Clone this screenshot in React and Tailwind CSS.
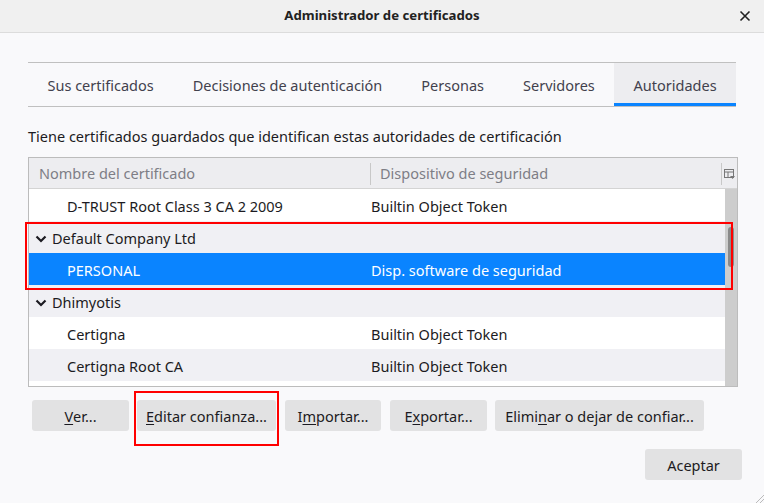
import React from "react";

const Chevron = () => (
  <svg width="12" height="12" viewBox="0 0 12 12" className="shrink-0">
    <path d="M1.5 3.5 L6 8 L10.5 3.5" fill="none" stroke="#1c1b22" strokeWidth="2.2" />
  </svg>
);

const U = ({ children }) => <span className="underline underline-offset-2">{children}</span>;

function Row({ bg, name, dev, group, selected }) {
  return (
    <div className={`flex h-[32px] items-center pt-[3px] ${bg} ${selected ? "text-white" : "text-[#1c1b22]"}`}>
      {group ? (
        <div className="flex items-center gap-[5px] pl-[6px]">
          <Chevron />
          <span>{name}</span>
        </div>
      ) : (
        <>
          <div className="w-[342px] shrink-0 pl-[38px]">{name}</div>
          <div>{dev}</div>
        </>
      )}
    </div>
  );
}

function Btn({ children, className = "" }) {
  return (
    <div className={`flex h-[31px] items-center justify-center rounded-[3px] bg-[#e2e2e3] pt-[2px] text-[#1c1b22] ${className}`}>
      {children}
    </div>
  );
}

export default function App() {
  return (
    <div
      className="relative h-[503px] w-[764px] overflow-hidden bg-[#f9f9fb] text-[14.5px] text-[#1c1b22]"
      style={{ fontFamily: '"Noto Sans", sans-serif' }}
    >
      <div className="relative flex h-[33px] items-center justify-center border-b border-[#dcdcdc] bg-[#f0f0f0]">
        <span className="text-[13.2px] font-bold text-[#222]">Administrador de certificados</span>
        <svg className="absolute right-[13px] top-[10px]" width="12" height="12" viewBox="0 0 12 12">
          <path d="M1.5 1.5 L10.5 10.5 M10.5 1.5 L1.5 10.5" stroke="#222" strokeWidth="1.6" />
        </svg>
      </div>

      <div className="px-[28px] pt-[29px]">
        <div className="flex h-[45px] border-y border-[#c0c0c0] text-[#42414d]">
          <div className="flex items-center px-[19.5px] pt-[3px]">Sus certificados</div>
          <div className="flex items-center px-[19.5px] pt-[3px]">Decisiones de autenticación</div>
          <div className="flex items-center px-[19.5px] pt-[3px]">Personas</div>
          <div className="flex items-center px-[19.5px] pt-[3px]">Servidores</div>
          <div className="relative flex flex-1 items-center justify-center bg-[#ededf0] pt-[3px]">
            Autoridades
            <div className="absolute bottom-0 left-0 right-0 h-[3px] bg-[#0a84ff]" />
          </div>
        </div>

        <div className="mt-[19px] leading-[20px]">
          Tiene certificados guardados que identifican estas autoridades de certificación
        </div>

        <div className="mt-[11px] h-[230px] w-[710px] overflow-hidden border border-[#bcbcbc] bg-white">
          <div className="flex h-[31px] items-center border-b border-[#d4d4d4] bg-[#ededf0] pt-[2px] text-[#7e7e86]">
            <div className="w-[341px] shrink-0 pl-[10px]">Nombre del certificado</div>
            <div className="h-[22px] w-px bg-[#c8c8c8]" />
            <div className="flex-1 pl-[9px]">Dispositivo de seguridad</div>
            <div className="h-[22px] w-px bg-[#c8c8c8]" />
            <svg className="mx-[2px]" width="11" height="11" viewBox="0 0 11 11">
              <rect x="0.5" y="0.5" width="9" height="8" fill="none" stroke="#777" />
              <path d="M0.5 3 H9.5 M4 3 V8.5" stroke="#777" />
              <path d="M6 7 H11 L8.5 10 Z" fill="#777" />
            </svg>
          </div>
          <div className="flex">
            <div className="flex-1">
              <Row bg="bg-white" name="D-TRUST Root Class 3 CA 2 2009" dev="Builtin Object Token" />
              <Row bg="bg-[#f0f0f4]" name="Default Company Ltd" group />
              <Row bg="bg-[#0a84ff]" name="PERSONAL" dev="Disp. software de seguridad" selected />
              <Row bg="bg-[#f0f0f4]" name="Dhimyotis" group />
              <Row bg="bg-white" name="Certigna" dev="Builtin Object Token" />
              <Row bg="bg-[#f0f0f4]" name="Certigna Root CA" dev="Builtin Object Token" />
              <Row bg="bg-white" name="" dev="" />
            </div>
            <div className="w-[12px] shrink-0 bg-[#cdcdcd] pt-[38px]">
              <div className="ml-[3px] h-[40px] w-[6px] rounded-[3px] bg-[#8a8a8a]" />
            </div>
          </div>
        </div>

        <div className="ml-[4px] mt-[13px] flex">
          <Btn className="w-[97px]"><U>V</U>er...</Btn>
          <Btn className="ml-[8px] w-[139px]"><U>E</U>ditar confianza...</Btn>
          <Btn className="ml-[9px] w-[96px]">I<U>m</U>portar...</Btn>
          <Btn className="ml-[9px] w-[97px]">E<U>x</U>portar...</Btn>
          <Btn className="ml-[8px] w-[209px]">Elimi<U>n</U>ar o dejar de confiar...</Btn>
        </div>

        <div className="mt-[18px] flex justify-end">
          <Btn className="mr-[-6px] w-[97px]">Aceptar</Btn>
        </div>
      </div>

      <div className="absolute left-[25px] top-[222px] h-[68px] w-[708px] border-2 border-[#ff0000]" />
      <div className="absolute left-[134px] top-[391px] h-[55px] w-[145px] border-2 border-[#ff0000]" />

      <svg className="absolute bottom-0 right-0" width="10" height="10" viewBox="0 0 10 10">
        <path d="M10 2 L2 10 M10 6 L6 10" stroke="#bbb" strokeWidth="1" />
      </svg>
    </div>
  );
}
